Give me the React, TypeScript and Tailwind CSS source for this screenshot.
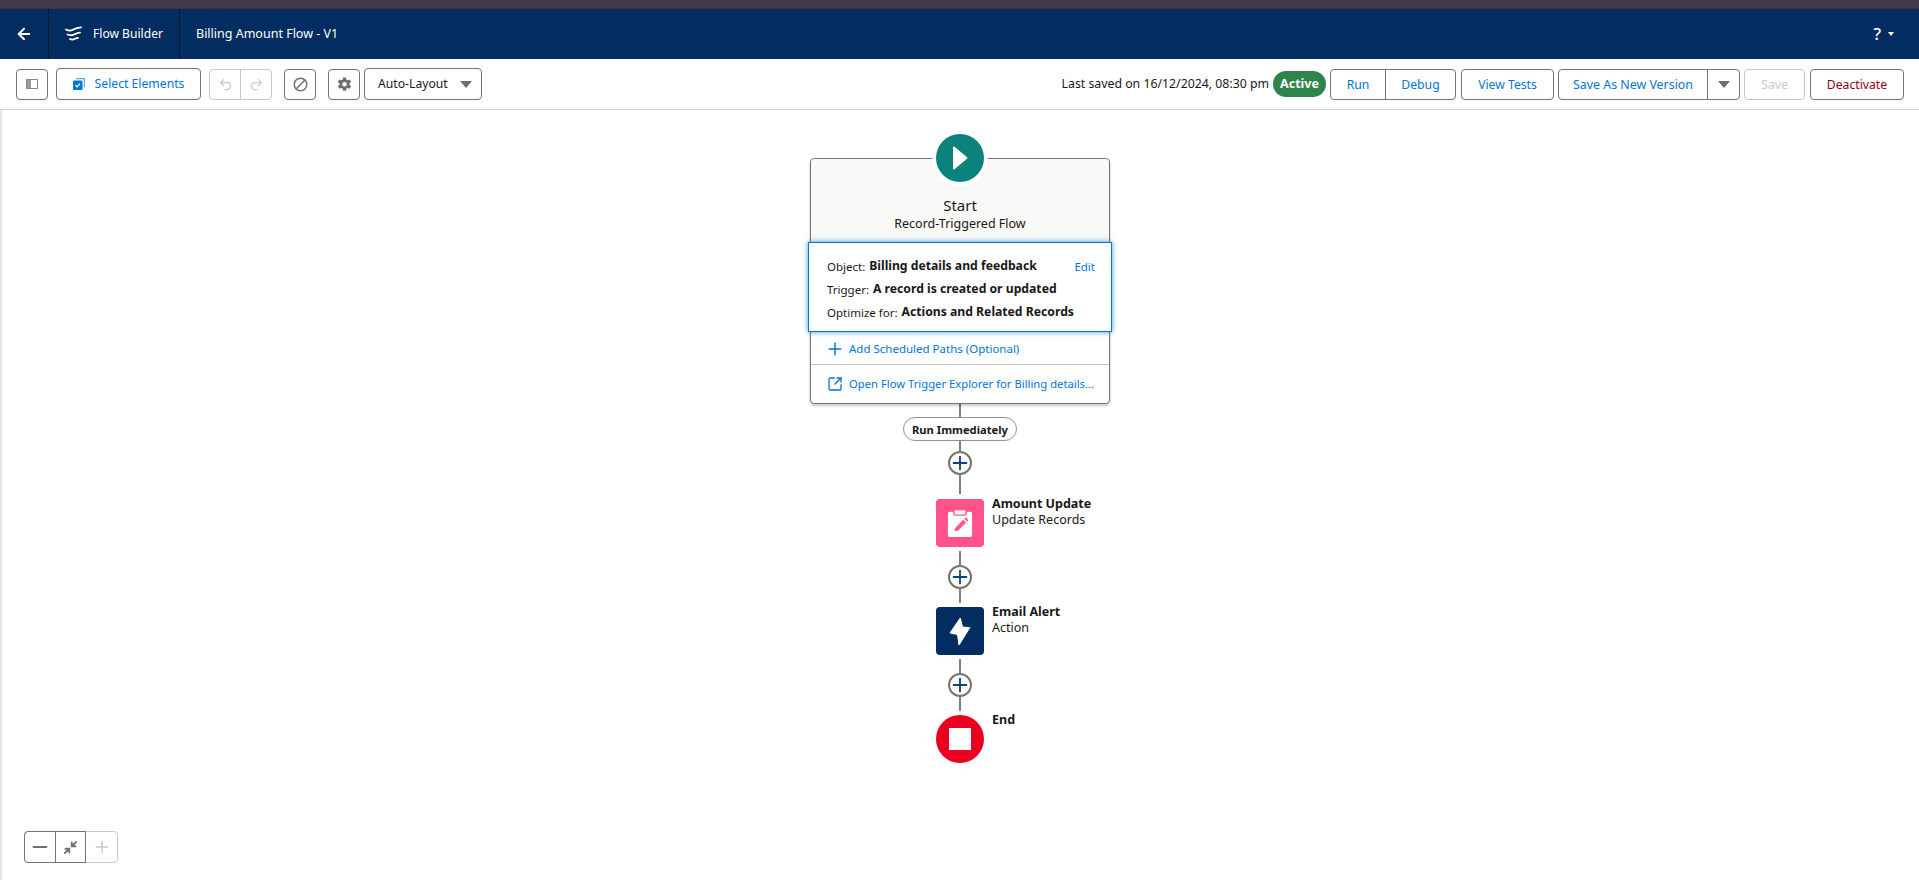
import { ArrowLeft, Ban, Minimize2, Minus, Plus, Redo2, SquareArrowOutUpRight, Undo2 } from 'lucide-react';
import type { ReactNode } from 'react';

const font = { fontFamily: '"Noto Sans", "Open Sans", Arial, sans-serif' };
const btn = 'flex items-center rounded border bg-white text-[12.2px]';

function Caret() {
  return <span className="h-0 w-0 border-x-[6px] border-t-[7px] border-x-transparent border-t-[#706e6b]" />;
}

function Line({ h }: { h: number }) {
  return <div className="w-[2px] bg-[#7f7f7f]" style={{ height: h }} />;
}

function AddButton() {
  return (
    <div className="flex h-6 w-6 items-center justify-center rounded-full border-2 border-[#747474] bg-white">
      <Plus size={22} strokeWidth={2} className="shrink-0 text-[#014486]" />
    </div>
  );
}

function Node({ icon, title, sub }: { icon: ReactNode; title: string; sub?: string }) {
  return (
    <div className="grid w-full grid-cols-[1fr_48px_1fr] gap-x-2">
      <div />
      {icon}
      <div className="-mt-[3px] text-[12.5px] leading-[16px] text-[#181818]">
        <div className="font-bold">{title}</div>
        {sub && <div>{sub}</div>}
      </div>
    </div>
  );
}

function Row({ label, value, right }: { label: string; value: string; right?: ReactNode }) {
  return (
    <div className="flex h-[23px] items-center text-[#181818]">
      <span className="text-[11.5px]">{label}</span>
      <span className="ml-1 text-[12.2px] font-bold">{value}</span>
      {right}
    </div>
  );
}

function Gear() {
  return (
    <svg width="15" height="15" viewBox="0 0 16 16" fill="#706e6b">
      <path d="M6.500 0.500h3l.5 2.300 1.300.7 2.200-.8 1.500 2.600-1.700 1.600v1.400l1.700 1.600-1.500 2.600-2.200-.8-1.300.7-.5 2.300h-3l-.5-2.300-1.300-.7-2.200.8L1 9.900l1.700-1.600V6.900L1 5.300l1.500-2.600 2.200.8L6 2.800z" />
      <circle cx="8" cy="7.600" r="2.400" fill="white" />
    </svg>
  );
}

export default function App() {
  return (
    <div className="flex h-screen flex-col overflow-hidden bg-white" style={font}>
      <div className="h-[9px] border-b border-[#3a3040] bg-[#443a4b]" />

      <header className="flex h-[50px] items-center bg-[#032d60] text-[12.5px] text-white">
        <div className="flex h-full w-[49px] items-center justify-center border-r border-[#04172f]">
          <ArrowLeft size={18} strokeWidth={2.6} />
        </div>
        <div className="flex h-full w-[131px] items-center gap-[10px] border-r border-[#04172f] pl-[16px]">
          <svg width="18" height="18" viewBox="0 0 18 18" fill="none" stroke="white" strokeWidth="1.8" strokeLinecap="round">
            <path d="M1 4.500c3 1.600 6 1.200 8-.2 2-1.200 4-1.600 7-2" />
            <path d="M2.500 9.500c3 1.200 5.500.8 7.500-.4 1.500-.8 3-1.200 5-1.400" />
            <path d="M5 14c1.500.8 3.500.6 5-.2 1-.5 2-.9 3-1" />
          </svg>
          <span className="text-[12.1px]">Flow Builder</span>
        </div>
        <span className="ml-4">Billing Amount Flow - V1</span>
        <div className="ml-auto mr-[25px] flex items-center gap-[7px]">
          <span className="text-[17px] font-medium">?</span>
          <span className="h-0 w-0 border-x-[3px] border-t-[4px] border-x-transparent border-t-white" />
        </div>
      </header>

      <div className="flex h-[51px] items-center border-b border-[#d0d0d0] pl-4 pr-[15px]">
        <button className={`${btn} h-[31px] w-8 justify-center border-[#747474]`}>
          <svg width="12" height="10" viewBox="0 0 12 10">
            <rect x="0.500" y="0.500" width="11" height="9" fill="none" stroke="#8a8a8a" />
            <rect x="1" y="1" width="4" height="8" fill="#9a9a9a" />
          </svg>
        </button>
        <button className={`${btn} ml-2 h-8 w-[145px] justify-center gap-[10px] border-[#747474] text-[#0176d3]`}>
          <svg width="12" height="12" viewBox="0 0 12 12">
            <path d="M3 0h8a1 1 0 0 1 1 1v8h-1.200V1.200H3z" fill="#5aa5e0" />
            <rect x="0" y="2.500" width="9.500" height="9.500" rx="1" fill="#0176d3" />
            <path d="M2.300 7.200l1.700 1.700 3-3.300" stroke="white" strokeWidth="1.200" fill="none" />
          </svg>
          Select Elements
        </button>
        <div className="ml-2 flex h-[31px] w-[63px] rounded border border-[#c9c9c9] text-[#c9c9c9]">
          <div className="flex flex-1 items-center justify-center border-r border-[#c9c9c9]">
            <Undo2 size={15} />
          </div>
          <div className="flex flex-1 items-center justify-center">
            <Redo2 size={15} />
          </div>
        </div>
        <button className={`${btn} ml-3 h-[31px] w-8 justify-center border-[#747474] text-[#706e6b]`}>
          <Ban size={15} strokeWidth={2.4} className="-scale-x-100" />
        </button>
        <button className={`${btn} ml-3 h-[31px] w-8 justify-center border-[#747474]`}>
          <Gear />
        </button>
        <button className={`${btn} ml-1 h-8 w-[118px] justify-between border-[#747474] pl-[13px] pr-[9px] text-[#181818]`}>
          Auto-Layout
          <Caret />
        </button>

        <span className="ml-auto pt-px text-[12.3px] text-[#181818]">Last saved on 16/12/2024, 08:30 pm</span>
        <span className="ml-[4px] flex h-[26px] w-[53px] items-center justify-center rounded-full bg-[#2e844a] text-[12.5px] font-bold text-white">
          Active
        </span>
        <div className={`${btn} ml-[4px] h-[31px] w-[126px] border-[#747474] text-[#0176d3]`}>
          <span className="flex h-full w-[55px] items-center justify-center border-r border-[#747474] pt-[2px]">Run</span>
          <span className="flex-1 pt-[2px] text-center">Debug</span>
        </div>
        <button className={`${btn} ml-[5px] h-[31px] w-[93px] justify-center border-[#747474] pt-[2px] text-[#0176d3]`}>View Tests</button>
        <div className={`${btn} ml-[4px] h-[31px] w-[182px] border-[#747474] text-[12.4px] text-[#0176d3]`}>
          <span className="flex h-full flex-1 items-center justify-center border-r border-[#747474] pt-[2px]">Save As New Version</span>
          <span className="flex w-[31px] justify-center">
            <Caret />
          </span>
        </div>
        <button className={`${btn} ml-[4px] h-[31px] w-[61px] justify-center border-[#c9c9c9] pt-[2px] text-[#c9c9c9]`}>Save</button>
        <button className={`${btn} ml-[5px] h-[31px] w-[94px] justify-center border-[#747474] pt-[2px] text-[#8e030f]`}>Deactivate</button>
      </div>

      <main className="relative flex flex-1 flex-col items-center border-l-2 border-[#e5e5e5] pt-[48px] pr-[1px]">
        <div className="relative w-[300px] rounded border border-[#747474] bg-white shadow-[0_2px_3px_rgba(0,0,0,0.2)]">
          <div className="absolute left-1/2 top-[-29px] flex h-14 w-14 -translate-x-1/2 items-center justify-center rounded-full bg-white">
            <div className="flex h-12 w-12 items-center justify-center rounded-full bg-[#0b827c]">
              <svg width="16" height="24" viewBox="0 0 16 24">
                <path d="M1 1.500c0-.8.800-1.200 1.500-.7L15 11.200c.6.400.6 1.200 0 1.600L2.500 23.200c-.7.500-1.500.1-1.500-.7z" fill="white" />
              </svg>
            </div>
          </div>
          <div className="h-[83px] rounded-t bg-[#f9f9f7] pt-[36px] text-center text-[#181818]">
            <div className="text-[15px] leading-[20px]">Start</div>
            <div className="text-[12.5px] leading-[18px]">Record-Triggered Flow</div>
          </div>
          <div className="relative -mx-[3px] h-[90px] border border-[#0176d3] bg-white pl-[18px] pr-[16px] pt-[12px] shadow-[0_0_5px_rgba(1,118,211,0.8)]">
            <Row label="Object:" value="Billing details and feedback" right={<span className="ml-auto text-[11.5px] text-[#0176d3]">Edit</span>} />
            <Row label="Trigger:" value="A record is created or updated" />
            <Row label="Optimize for:" value="Actions and Related Records" />
          </div>
          <div className="flex h-[33px] items-center gap-[7px] border-b border-[#c9c9c9] px-4 pt-px text-[11.5px] text-[#0176d3]">
            <span className="flex w-[15px] justify-center">
              <Plus size={20} strokeWidth={1.8} className="shrink-0" />
            </span>
            Add Scheduled Paths (Optional)
          </div>
          <div className="flex h-[38px] items-center gap-[7px] whitespace-nowrap px-4 text-[11.25px] text-[#0176d3]">
            <span className="flex w-[15px] justify-center">
              <SquareArrowOutUpRight size={16} strokeWidth={2} className="shrink-0" />
            </span>
            Open Flow Trigger Explorer for Billing details...
          </div>
        </div>

        <Line h={13} />
        <div className="flex h-6 w-[114px] items-center justify-center rounded-full border border-[#939393] bg-white pt-[2px] text-[11.2px] font-bold text-[#181818]">
          Run Immediately
        </div>
        <Line h={10} />
        <AddButton />
        <Line h={19} />
        <div className="h-[5px]" />
        <Node
          title="Amount Update"
          sub="Update Records"
          icon={
            <div className="flex h-12 w-12 items-center justify-center rounded bg-[#ff538a]">
              <svg width="26" height="30" viewBox="0 0 28 32">
                <path d="M3 4h22a2 2 0 0 1 2 2v23a2 2 0 0 1-2 2H3a2 2 0 0 1-2-2V6a2 2 0 0 1 2-2z" fill="white" />
                <path d="M9 1.500h10a1.500 1.500 0 0 1 1.500 1.500v3a1.500 1.500 0 0 1-1.500 1.500H9A1.500 1.500 0 0 1 7.500 6V3A1.500 1.500 0 0 1 9 1.500z" fill="white" stroke="#ff538a" strokeWidth="1.500" />
                <path d="M17.500 12.500l3 3-8.500 8.500-4 1 1-4zM18.500 11.500l1-1a1 1 0 0 1 1.400 0l1.600 1.600a1 1 0 0 1 0 1.400l-1 1z" fill="#ff538a" />
              </svg>
            </div>
          }
        />
        <div className="h-1" />
        <Line h={14} />
        <AddButton />
        <Line h={14} />
        <div className="h-1" />
        <Node
          title="Email Alert"
          sub="Action"
          icon={
            <div className="flex h-12 w-12 items-center justify-center rounded bg-[#032d60]">
              <svg width="22" height="29" viewBox="0 0 22 29">
                <path d="M11.300 1L1 16l7.500 1.500L10 28l10.800-17.300-7.300-.7z" fill="white" stroke="white" strokeLinejoin="round" />
              </svg>
            </div>
          }
        />
        <div className="h-1" />
        <Line h={14} />
        <AddButton />
        <Line h={14} />
        <div className="h-1" />
        <Node
          title="End"
          icon={
            <div className="flex h-12 w-12 items-center justify-center rounded-full bg-[#ea001e]">
              <div className="h-[22px] w-[22px] bg-white" />
            </div>
          }
        />

        <div className="absolute bottom-[17px] left-[22px] flex h-8 w-[94px] rounded border border-[#c9c9c9]">
          <div className="-m-px flex w-[32px] items-center justify-center rounded-l border border-[#747474] text-[#706e6b]">
            <Minus size={22} strokeWidth={2} className="shrink-0" />
          </div>
          <div className="-my-px flex w-[31px] items-center justify-center border-y border-r border-[#747474] text-[#706e6b]">
            <Minimize2 size={15} strokeWidth={3} />
          </div>
          <div className="flex flex-1 items-center justify-center text-[#c9c9c9]">
            <Plus size={20} strokeWidth={1.8} className="shrink-0" />
          </div>
        </div>
      </main>
    </div>
  );
}
